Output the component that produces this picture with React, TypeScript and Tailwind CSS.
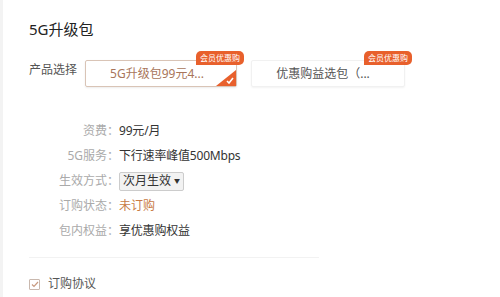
import React from "react";

const rows = [
  { label: "资费", value: "99元/月" },
  { label: "5G服务", value: "下行速率峰值500Mbps" },
  { label: "生效方式", value: "select" },
  { label: "订购状态", value: "未订购", accent: true },
  { label: "包内权益", value: "享优惠购权益" },
];

function Badge() {
  return (
    <span className="absolute -top-[10px] -right-[8px] h-[14px] px-[4px] rounded-t-[5px] rounded-br-[5px] bg-[#e8602c] text-white text-[8px] leading-[14px]">
      会员优惠购
    </span>
  );
}

export default function App() {
  return (
    <div
      className="w-[500px] h-[297px] bg-white overflow-hidden border-l-[3px] border-[#f3f3f3] text-[#333]"
      style={{ fontFamily: '"Noto Sans", "Noto Sans CJK SC", sans-serif' }}
    >
      <div className="pl-[26px] pt-[18px]">
        <h1 className="text-[15px] leading-[22px] text-[#222]">5G升级包</h1>

        {/* 产品选择 */}
        <div className="flex mt-[20px]">
          <span className="text-[12px] leading-[18px] text-[#555] w-[56px] mt-[1px]">产品选择</span>
          <div className="flex gap-[14px]">
            <div className="relative w-[152px] h-[27px] border border-[#d9c4b6] rounded-[2px] flex items-center justify-center text-[12px] text-[#a8755a] shadow-[0_1px_2px_rgba(0,0,0,0.08)]">
              <span className="pr-[8px]">5G升级包99元4...</span>
              <Badge />
              <span className="absolute right-0 bottom-0 w-0 h-0 border-l-[20px] border-l-transparent border-b-[16px] border-b-[#e8602c]" />
              <svg className="absolute right-[2px] bottom-[2px]" width="8" height="7" viewBox="0 0 8 7">
                <path d="M1 4 L3 6 L7 1" stroke="white" strokeWidth="1.6" fill="none" />
              </svg>
            </div>
            <div className="relative w-[154px] h-[27px] border border-[#f1f1f1] rounded-[2px] flex items-center justify-center text-[12px] text-[#555] shadow-[0_1px_2px_rgba(0,0,0,0.05)]">
              <span className="pr-[10px]">优惠购益选包（...</span>
              <Badge />
            </div>
          </div>
        </div>

        {/* 详情 */}
        <div className="mt-[35px] flex flex-col gap-[7px]">
          {rows.map((r) => (
            <div key={r.label} className="flex items-center h-[18px] text-[12px]">
              <span className="w-[90px] text-right text-[#aaa]">{r.label}：</span>
              {r.value === "select" ? (
                <span className="h-[19px] px-[3px] flex items-center gap-[3px] border border-[#ccc] bg-[#f2f2f2] rounded-[2px] text-[#333]">
                  次月生效<span className="text-[6px]">▼</span>
                </span>
              ) : (
                <span className={r.accent ? "text-[#c87a45]" : "text-[#333] tracking-[-0.2px]"}>{r.value}</span>
              )}
            </div>
          ))}
        </div>

        <div className="mt-[17px] w-[290px] h-px bg-[#f2f2f2]" />

        <div className="mt-[17px] flex items-center gap-[8px]">
          <span className="w-[11px] h-[11px] border border-[#c9b8ae] rounded-[1px] flex items-center justify-center">
            <svg width="8" height="7" viewBox="0 0 8 7">
              <path d="M1 3.5 L3 5.5 L7 1" stroke="#c89a80" strokeWidth="1.2" fill="none" />
            </svg>
          </span>
          <span className="text-[12px] text-[#555]">订购协议</span>
        </div>
      </div>
    </div>
  );
}
